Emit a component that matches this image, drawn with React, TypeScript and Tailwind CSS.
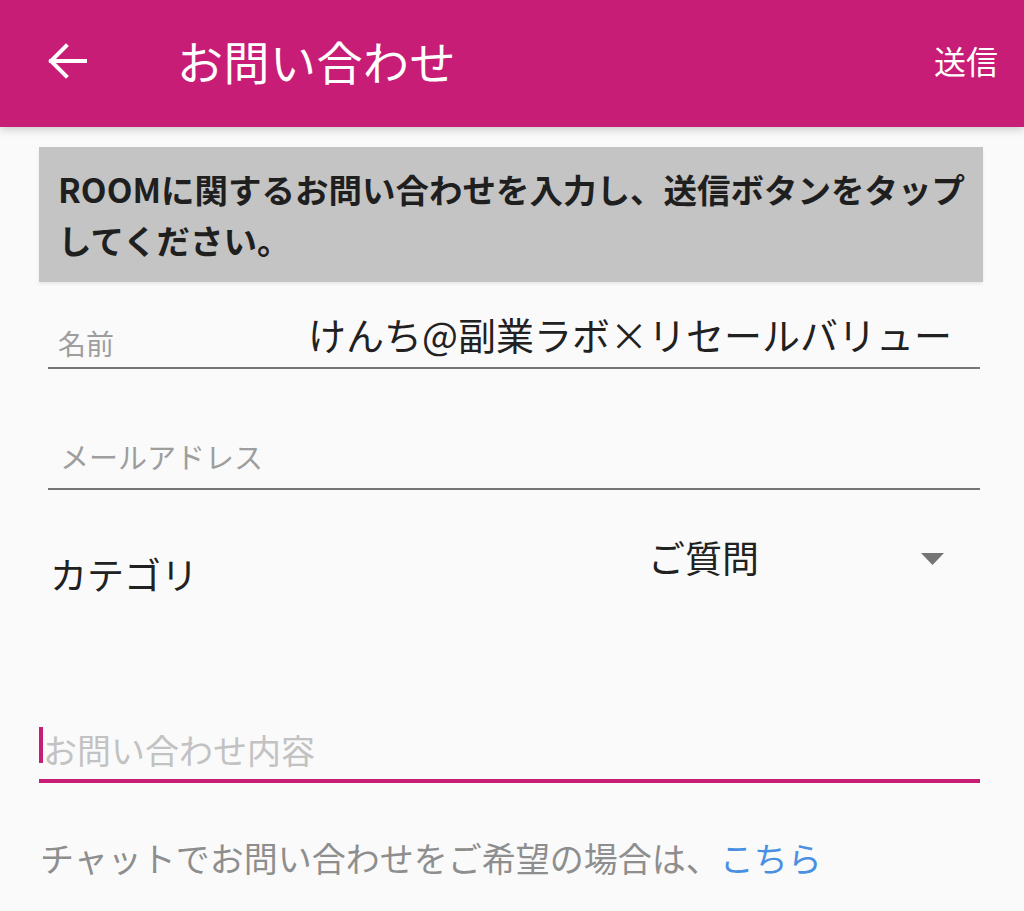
import React from 'react';

const jp = { fontFamily: '"Noto Sans CJK JP", "Noto Sans", sans-serif' };

// Inquiry form screen
const App = () => {
  return (
    <div className="min-h-screen bg-[#fafafa]" style={jp}>
      <header className="h-[127px] bg-[#c81d77] flex items-center shadow-[0_3px_8px_rgba(0,0,0,0.18)] relative z-10">
        <button className="ml-[47px] w-[40px] h-[40px] flex items-center justify-center mb-[6px]">
          <svg width="40" height="36" viewBox="0 0 40 36" fill="none" stroke="white" strokeWidth="4" strokeLinecap="square">
            <path d="M38 18H4" />
            <path d="M19 3L4 18L19 33" />
          </svg>
        </button>
        <h1 className="ml-[90px] text-[46px] leading-none text-white tracking-[0.5px] mb-[8px]">お問い合わせ</h1>
        <div className="ml-auto mr-[26px] text-[32px] leading-none text-white mb-[8px]">送信</div>
      </header>

      <div className="ml-[39px] mr-[41px] mt-[20px] h-[135px] bg-[#c4c4c4] shadow-[0_2px_3px_rgba(0,0,0,0.08)] pl-[19px] pt-[16px]">
        <p className="text-[33.5px] leading-[51px] font-bold text-[#1f1f1f] whitespace-nowrap">
          ROOMに関するお問い合わせを入力し、送信ボタンをタップ
          <br />
          してください。
        </p>
      </div>

      <div className="ml-[48px] mr-[44px] mt-[33px] flex items-end border-b-2 border-[#757575] pb-[10px]">
        <span className="w-[260px] pl-[10px] text-[28px] leading-none text-[#9e9e9e]">名前</span>
        <span className="text-[38px] leading-none text-[#212121] mb-[4px] whitespace-nowrap">けんち@副業ラボ×リセールバリュー</span>
      </div>

      <div className="ml-[48px] mr-[44px] mt-[73px] border-b-2 border-[#757575] pb-[14px]">
        <span className="pl-[12px] text-[29px] leading-none text-[#9e9e9e]">メールアドレス</span>
      </div>

      <div className="ml-[50px] mr-[80px] mt-[49px] flex items-start">
        <span className="w-[598px] mt-[17px] text-[37px] leading-none text-[#212121]">カテゴリ</span>
        <span className="flex-1 text-[37px] leading-none text-[#212121]">ご質問</span>
        <svg className="mt-[14px]" width="23" height="12" viewBox="0 0 23 12">
          <path d="M0 0H23L11.5 12Z" fill="#757575" />
        </svg>
      </div>

      <div className="ml-[39px] mr-[44px] mt-[134px] flex items-start border-b-4 border-[#c81d77] pb-[12px]">
        <span className="w-[4px] h-[36px] bg-[#c81d77]" />
        <span className="mt-[6px] text-[34px] leading-none text-[#c2c2c2]">お問い合わせ内容</span>
      </div>

      <p className="ml-[40px] mt-[58px] text-[34px] leading-none text-[#8e8e8e]">
        チャットでお問い合わせをご希望の場合は、<span className="text-[#4a90e2]">こちら</span>
      </p>
    </div>
  );
};

export default App;
